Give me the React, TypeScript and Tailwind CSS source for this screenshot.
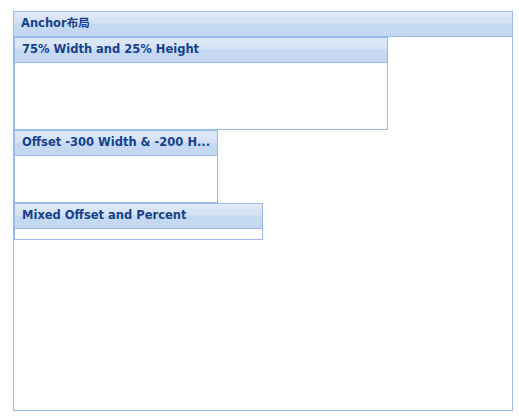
const headerBg =
  "bg-[linear-gradient(to_bottom,#dfe9f7_0%,#d4e2f5_45%,#c5d9f2_50%,#c3d7f1_100%)]";

function Panel(props: { title: string; className: string; bodyClass: string }) {
  return (
    <div className={`flex flex-col border border-[#99bbe8] bg-white ${props.className}`}>
      <div
        className={`h-[25px] shrink-0 border-b border-[#99bbe8] ${headerBg} pl-[7px] flex items-center text-[11.5px] font-bold text-[#15428b] whitespace-nowrap overflow-hidden`}
      >
        {props.title}
      </div>
      <div className={props.bodyClass} />
    </div>
  );
}

export default function App() {
  return (
    <div className="w-[519px] h-[417px] bg-white pt-[11px] pl-[13px] font-['DejaVu_Sans','Noto_Sans_CJK_SC',sans-serif]">
      <div className="w-[500px] h-[400px] border border-[#99bbe8] flex flex-col">
        <div
          className={`h-[25px] shrink-0 border-b border-[#99bbe8] ${headerBg} pl-[7px] flex items-center text-[11.5px] font-bold text-[#15428b]`}
        >
          Anchor布局
        </div>
        <div className="flex flex-col items-start">
          <Panel title="75% Width and 25% Height" className="w-[374px] h-[93px]" bodyClass="flex-1" />
          <Panel title="Offset -300 Width & -200 H..." className="w-[204px] h-[73px]" bodyClass="flex-1" />
          <Panel title="Mixed Offset and Percent" className="w-[249px] h-[37px]" bodyClass="flex-1" />
        </div>
      </div>
    </div>
  );
}
